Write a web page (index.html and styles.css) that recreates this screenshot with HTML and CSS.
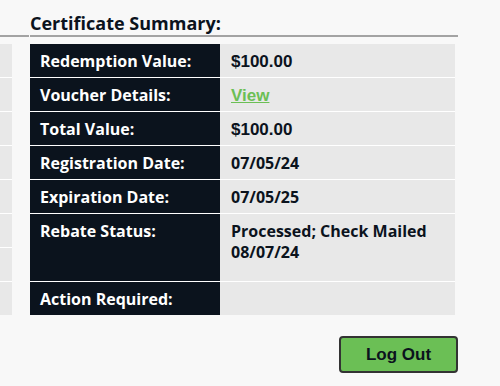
FILE: index.html
```html
<!DOCTYPE html>
<html lang="en">

<head>
  <meta charset="UTF-8">
  <title>Certificate Summary</title>
  <link rel="stylesheet" href="styles.css">
</head>

<body>

  <div class="page">
    <div class="side">
      <div class="side-head"></div>
      <div class="side-table">
        <div class="side-row"></div>
        <div class="side-row"></div>
        <div class="side-row"></div>
        <div class="side-row"></div>
        <div class="side-row"></div>
        <div class="side-row"></div>
        <div class="side-row"></div>
        <div class="side-row"></div>
      </div>
    </div>

    <div class="summary">
      <h2>Certificate Summary:</h2>
      <table class="summary-table">
        <tr>
          <th>Redemption Value:</th>
          <td class="num">$100.00</td>
        </tr>
        <tr>
          <th>Voucher Details:</th>
          <td class="num"><a href="#">View</a></td>
        </tr>
        <tr>
          <th>Total Value:</th>
          <td class="num">$100.00</td>
        </tr>
        <tr>
          <th>Registration Date:</th>
          <td>07/05/24</td>
        </tr>
        <tr>
          <th>Expiration Date:</th>
          <td>07/05/25</td>
        </tr>
        <tr class="tall">
          <th>Rebate Status:</th>
          <td>Processed; Check Mailed<br>08/07/24</td>
        </tr>
        <tr>
          <th>Action Required:</th>
          <td></td>
        </tr>
      </table>
      <div class="actions">
        <button type="button">Log Out</button>
      </div>
    </div>
  </div>

</body>

</html>
```

FILE: styles.css
```css
* {
  box-sizing: border-box;
}

body {
  margin: 0;
  background-color: #f8f8f8;
  font-family: "Open Sans", "Noto Sans", sans-serif;
  color: #0b131d;
}

.page {
  display: flex;
  gap: 1px;
}

/* LEFT PANEL (cut off) */

.side {
  width: 29px;
}

.side-head {
  height: 37px;
  border-bottom: 2px solid #a3a3a3;
  margin-bottom: 7px;
}

.side-table {
  width: 12px;
}

.side-row {
  height: 34px;
  background-color: #e8e8e8;
  border-bottom: 1px solid #ffffff;
}

.side-row:last-child {
  height: 33px;
  border-bottom: 0 none;
}

/* SUMMARY */

.summary {
  width: 428px;
}

.summary h2 {
  margin: 0 0 7px;
  padding: 11px 0 0;
  font-size: 18px;
  line-height: 24px;
  font-weight: 700;
  border-bottom: 2px solid #a3a3a3;
}

.summary-table {
  width: 425px;
  border-collapse: collapse;
}

.summary-table th,
.summary-table td {
  padding: 7px 10px 5px;
  font-size: 16px;
  line-height: 21px;
  font-weight: 700;
  text-align: left;
  vertical-align: top;
  border-bottom: 1px solid #ffffff;
}

.summary-table tr:last-child th,
.summary-table tr:last-child td {
  border-bottom: 0 none;
  height: 33px;
}

.summary-table th {
  width: 190px;
  background-color: #0b131d;
  color: #ffffff;
}

.summary-table td {
  padding-left: 11px;
  background-color: #e8e8e8;
}

.summary-table .num {
  font-family: "Liberation Sans", Arial, sans-serif;
  font-size: 17px;
}

.summary-table a {
  color: #6bbf55;
}

.summary-table .tall th,
.summary-table .tall td {
  padding-bottom: 18px;
}

.actions {
  display: flex;
  justify-content: flex-end;
  margin-top: 21px;
}

.actions button {
  width: 119px;
  height: 37px;
  background-color: #6bbf55;
  border: 2px solid #333333;
  border-radius: 4px;
  font-family: "Liberation Sans", Arial, sans-serif;
  font-size: 17px;
  font-weight: 700;
  color: #0b131d;
  cursor: pointer;
}
```
